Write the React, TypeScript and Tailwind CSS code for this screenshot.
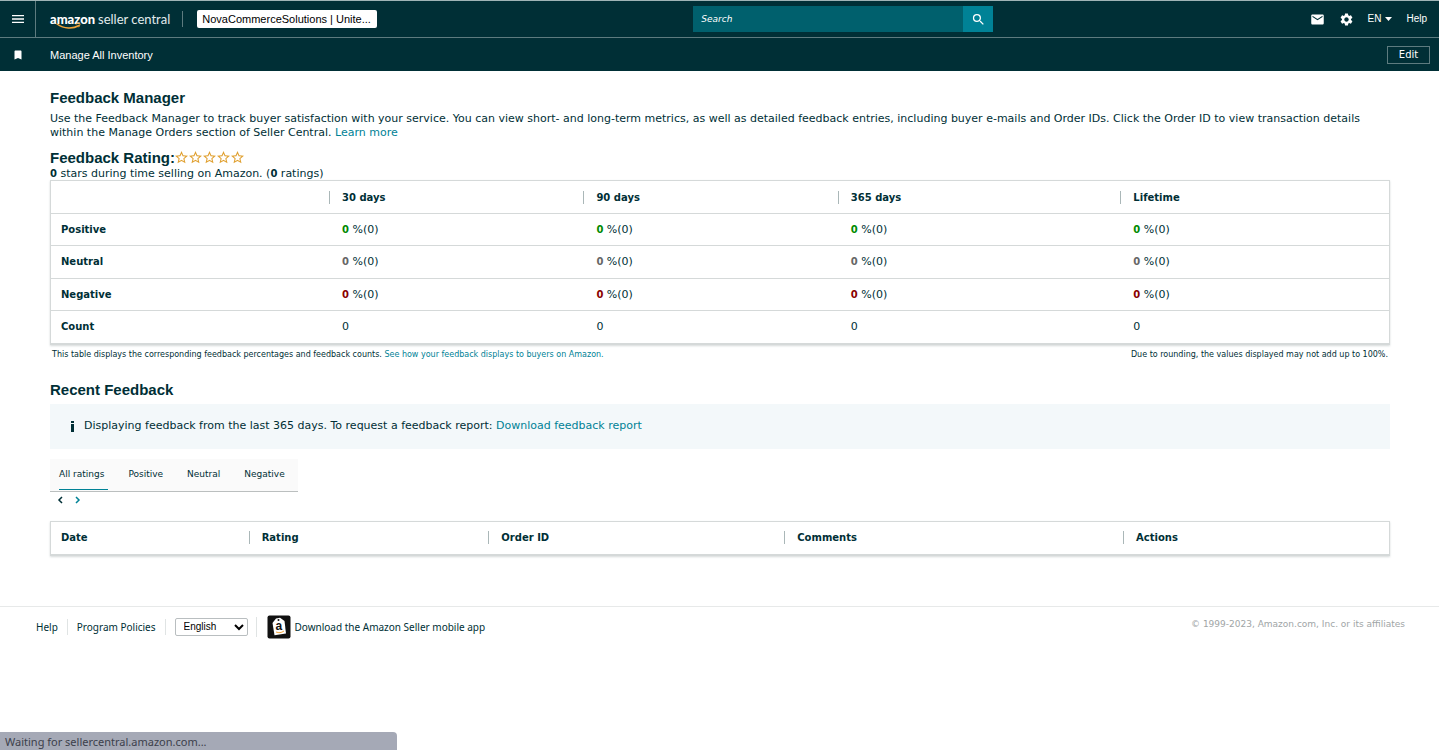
import { useState } from 'react'
import { MdBookmark, MdEmail, MdMenu, MdSearch, MdSettings, MdStarBorder } from 'react-icons/md'

const PERIODS = ['30 days', '90 days', '365 days', 'Lifetime']

const RATING_ROWS = [
  { label: 'Positive', color: 'text-[#008a00]' },
  { label: 'Neutral', color: 'text-[#666666]' },
  { label: 'Negative', color: 'text-[#8a0000]' },
]

const RECENT_COLUMNS = ['Date', 'Rating', 'Order ID', 'Comments', 'Actions']

const TABS = ['All ratings', 'Positive', 'Neutral', 'Negative']

const SANS = "font-['DejaVu_Sans',sans-serif]"
const ARIAL = "font-['Liberation_Sans',Arial,sans-serif]"
const BOLD = 'text-[10px] font-bold'

function Logo() {
  return (
    <a href="#" className="relative flex items-baseline gap-[3px] pl-[14px] font-['Lato',sans-serif] text-[13px] leading-4 text-[#e3eced]">
      <span className="font-black text-white">amazon</span>
      <span>seller central</span>
      <svg className="absolute left-[20px] top-[12px]" width="28" height="7" viewBox="0 0 28 7" fill="none">
        <path d="M1 1c7 5 16 5 22 1.500" stroke="#f3a53a" strokeWidth="1.500" strokeLinecap="round" />
        <path d="M20 1c2-1 4-.8 4 0s-.4 2-1.300 3" stroke="#f3a53a" strokeWidth="1" strokeLinecap="round" />
      </svg>
    </a>
  )
}

function Header() {
  return (
    <header className={`${ARIAL} bg-[#002f36] text-white`}>
      {/* main bar */}
      <div className="flex h-[38px] items-center border-y border-t-[#9fb4b6] border-b-[#5d7b7f]">
        <div className="flex flex-[14] items-center self-stretch">
          <button aria-label="Menu" className="flex w-9 items-center justify-center self-stretch border-r border-[#5d7b7f]">
            <MdMenu size={16} />
          </button>
          <Logo />
          <span className="ml-3 mr-[14px] h-4 w-px bg-[#5d7b7f]" />
          <button className="h-[18px] w-[180px] whitespace-nowrap rounded-[2px] bg-white px-[5px] text-left text-[11px] leading-[18px] text-black">
            NovaCommerceSolutions | Unite...
          </button>
        </div>
        <form className="flex h-[26px] w-[300px]" onSubmit={(e) => e.preventDefault()}>
          <input
            type="text"
            aria-label="Search"
            placeholder="Search"
            className={`${SANS} min-w-0 flex-1 bg-[#00606d] px-2 text-[9px] italic text-white outline-none placeholder:text-white`}
          />
          <button aria-label="Submit search" className="flex w-[30px] items-center justify-center bg-[#008296]">
            <MdSearch size={15} stroke="currentColor" />
          </button>
        </form>
        <nav className="flex flex-[9] items-center justify-end gap-[14px] text-[10px]">
          <a href="#" aria-label="Messages"><MdEmail size={15} /></a>
          <a href="#" aria-label="Settings"><MdSettings size={15} /></a>
          <button className="flex items-center gap-1">
            EN
            <svg width="7" height="4" viewBox="0 0 7 4" fill="currentColor"><path d="M0 0h7L3.500 4z" /></svg>
          </button>
          <a href="#" className="mr-3">Help</a>
        </nav>
      </div>
      {/* favourites bar */}
      <div className="flex h-[33px] items-center pr-[9px]">
        <button aria-label="Bookmarks" className="flex w-9 justify-center"><MdBookmark size={12} /></button>
        <a href="#" className="flex-1 pl-[14px] text-[11px]">Manage All Inventory</a>
        <button className={`${SANS} h-[18px] w-[43px] border border-[#5d7b7f] text-[10px] leading-4`}>Edit</button>
      </div>
    </header>
  )
}

function HeadCell({ children }: { children: string }) {
  return (
    <th scope="col" className={`${BOLD} p-0 text-left`}>
      <span className="block border-l border-[#aab7b8] pl-3 leading-[13px]">{children}</span>
    </th>
  )
}

function RatingTable() {
  return (
    <table className="w-full table-fixed border border-b-2 border-[#d5d9d9] shadow-[0_1px_2px_#d5d9d9]">
      <colgroup>
        <col className="w-[20.800%]" />
        <col className="w-[19%]" />
        <col className="w-[19%]" />
        <col className="w-[21.100%]" />
        <col />
      </colgroup>
      <thead>
        <tr className="h-[33px]">
          <td />
          {PERIODS.map((period) => (
            <HeadCell key={period}>{period}</HeadCell>
          ))}
        </tr>
      </thead>
      <tbody>
        {RATING_ROWS.map((row) => (
          <tr key={row.label} className="h-8 border-t border-[#d5d9d9] even:h-[33px]">
            <th scope="row" className={`${BOLD} py-0 pl-[10px] text-left`}>{row.label}</th>
            {PERIODS.map((period) => (
              <td key={period} className="py-0 pl-[13px]">
                <b className={`${BOLD} ${row.color}`}>0</b> %(0)
              </td>
            ))}
          </tr>
        ))}
        <tr className="h-[33px] border-t border-[#d5d9d9]">
          <th scope="row" className={`${BOLD} py-0 pl-[10px] text-left`}>Count</th>
          {PERIODS.map((period) => (
            <td key={period} className="py-0 pl-[13px]">0</td>
          ))}
        </tr>
      </tbody>
    </table>
  )
}

function RecentTable() {
  return (
    <table className="mt-3 w-full table-fixed border border-b-2 border-[#d5d9d9] shadow-[0_1px_2px_#d5d9d9]">
      <colgroup>
        <col className="w-[14.800%]" />
        <col className="w-[17.900%]" />
        <col className="w-[22.100%]" />
        <col className="w-[25.300%]" />
        <col />
      </colgroup>
      <thead>
        <tr className="h-[34px]">
          {RECENT_COLUMNS.map((column, i) =>
            i === 0 ? (
              <th key={column} scope="col" className={`${BOLD} py-0 pl-[10px] text-left`}>{column}</th>
            ) : (
              <HeadCell key={column}>{column}</HeadCell>
            ),
          )}
        </tr>
      </thead>
    </table>
  )
}

function Footer() {
  return (
    <footer className="mt-[50px] flex items-start justify-between border-t border-[#e7e9e9] pl-9 pr-[34px] pt-2 font-['Noto_Sans',sans-serif] text-[10px]">
      <div className="flex h-6 items-center">
        <a href="#">Help</a>
        <span className="mx-[9px] h-4 w-px bg-[#e0e4e4]" />
        <a href="#">Program Policies</a>
        <span className="mx-[9px] h-4 w-px bg-[#e0e4e4]" />
        <span className="relative">
          <select aria-label="Language" className={`${ARIAL} block h-[18px] w-[73px] appearance-none rounded-[2px] border border-[#b9bec0] bg-white pl-2 text-[10px] text-black`}>
            <option>English</option>
          </select>
          <svg className="pointer-events-none absolute right-1 top-[6px]" width="10" height="7" viewBox="0 0 10 7" fill="none">
            <path d="M1 1l4 4 4-4" stroke="#000" strokeWidth="2" />
          </svg>
        </span>
        <span className="ml-2 mr-[10px] h-5 w-px bg-[#e0e4e4]" />
        <a href="#" className="flex items-center gap-1">
          <svg width="24" height="24" viewBox="0 0 24 24">
            <rect x="0.500" y="0.500" width="23" height="23" rx="2" fill="#111" />
            <path d="M5.500 8l3.500-4.500 4-.8 4.500 3.300 1.500 12.500-11.500 1.800z" fill="#fff" />
            <circle cx="11.500" cy="5" r="1" fill="#111" />
            <text x="8.500" y="15" fontSize="12" fontWeight="700" fontFamily="Liberation Sans, sans-serif" fill="#111">a</text>
            <path d="M9 17c3 1 5 1 8-1" stroke="#f3a53a" strokeWidth="1" fill="none" />
          </svg>
          Download the Amazon Seller mobile app
        </a>
      </div>
      <p className={`${SANS} text-[9px] leading-[18px] text-[#a0a5a6]`}>© 1999-2023, Amazon.com, Inc. or its affiliates</p>
    </footer>
  )
}

export default function App() {
  const [tab, setTab] = useState('All ratings')

  return (
    <div className={`${SANS} min-h-screen bg-white text-[11px] leading-[14px] text-[#002f36]`}>
      <Header />

      <main className="pl-[50px] pr-[49px] pt-[18px]">
        <h1 className={`${ARIAL} text-[15px] font-bold leading-[18px]`}>Feedback Manager</h1>
        <p className="mt-[5px]">
          Use the Feedback Manager to track buyer satisfaction with your service. You can view short- and long-term
          metrics, as well as detailed feedback entries, including buyer e-mails and Order IDs. Click the Order ID to
          view transaction details within the Manage Orders section of Seller Central.{' '}
          <a href="#" className="text-[#008296]">Learn more</a>
        </p>

        <div className="mt-[9px] flex items-center">
          <h2 className={`${ARIAL} text-[15px] font-bold leading-[18px]`}>Feedback Rating:</h2>
          <span role="img" aria-label="0 out of 5 stars" className="flex gap-px pb-[2px] text-[#e0a030]">
            {[1, 2, 3, 4, 5].map((n) => (
              <MdStarBorder key={n} size={13} viewBox="2 2 20 20" />
            ))}
          </span>
        </div>
        <p className="leading-[13px]">
          <b className={BOLD}>0</b> stars during time selling on Amazon. (<b className={BOLD}>0</b> ratings)
        </p>

        <RatingTable />
        <div className="mt-1 flex justify-between px-[2px] text-[8px] leading-3">
          <p>
            This table displays the corresponding feedback percentages and feedback counts.{' '}
            <a href="#" className="text-[#008296]">See how your feedback displays to buyers on Amazon.</a>
          </p>
          <p>Due to rounding, the values displayed may not add up to 100%.</p>
        </div>

        <h2 className={`${ARIAL} mt-5 text-[15px] font-bold leading-[18px]`}>Recent Feedback</h2>
        <div className="mt-[5px] flex h-[45px] items-center bg-[#f3f8fa] pl-5">
          <svg className="mr-[9px]" width="5" height="11" viewBox="0 0 5 11" fill="currentColor">
            <path d="M1 0h3v2H1zM1 3h3v8H1z" />
          </svg>
          <p>
            Displaying feedback from the last 365 days. To request a feedback report:{' '}
            <a href="#" className="text-[#008296]">Download feedback report</a>
          </p>
        </div>

        {/* rating filter */}
        <div role="tablist" className="mt-[10px] flex h-[33px] w-fit items-start gap-5 border-b border-[#bbbfbf] bg-[#fafafa] px-[9px] text-[9px]">
          {TABS.map((name) => (
            <button
              key={name}
              role="tab"
              aria-selected={tab === name}
              onClick={() => setTab(name)}
              className="flex flex-col"
            >
              <span className="pr-1 leading-[30px]">{name}</span>
              {tab === name && <span className="h-px w-full shrink-0 bg-[#008296]" />}
            </button>
          ))}
        </div>
        <div className="flex h-[17px] items-center gap-3 pl-[7px]">
          <button aria-label="Previous page">
            <svg width="6" height="8" viewBox="0 0 6 8" fill="none"><path d="M5 1L2 4l3 3" stroke="#002f36" strokeWidth="1.500" /></svg>
          </button>
          <button aria-label="Next page" className="text-[#008296]">
            <svg width="6" height="8" viewBox="0 0 6 8" fill="none"><path d="M1 1l3 3-3 3" stroke="currentColor" strokeWidth="1.500" /></svg>
          </button>
        </div>

        <RecentTable />
      </main>

      <Footer />

      {/* browser status bubble */}
      <div className="fixed bottom-0 left-0 h-[18px] w-[397px] rounded-tr bg-[#a5a9b6] pl-[5px] font-['Noto_Sans',sans-serif] text-[11px] leading-5 text-[#3c404b]">
        Waiting for sellercentral.amazon.com...
      </div>
    </div>
  )
}
